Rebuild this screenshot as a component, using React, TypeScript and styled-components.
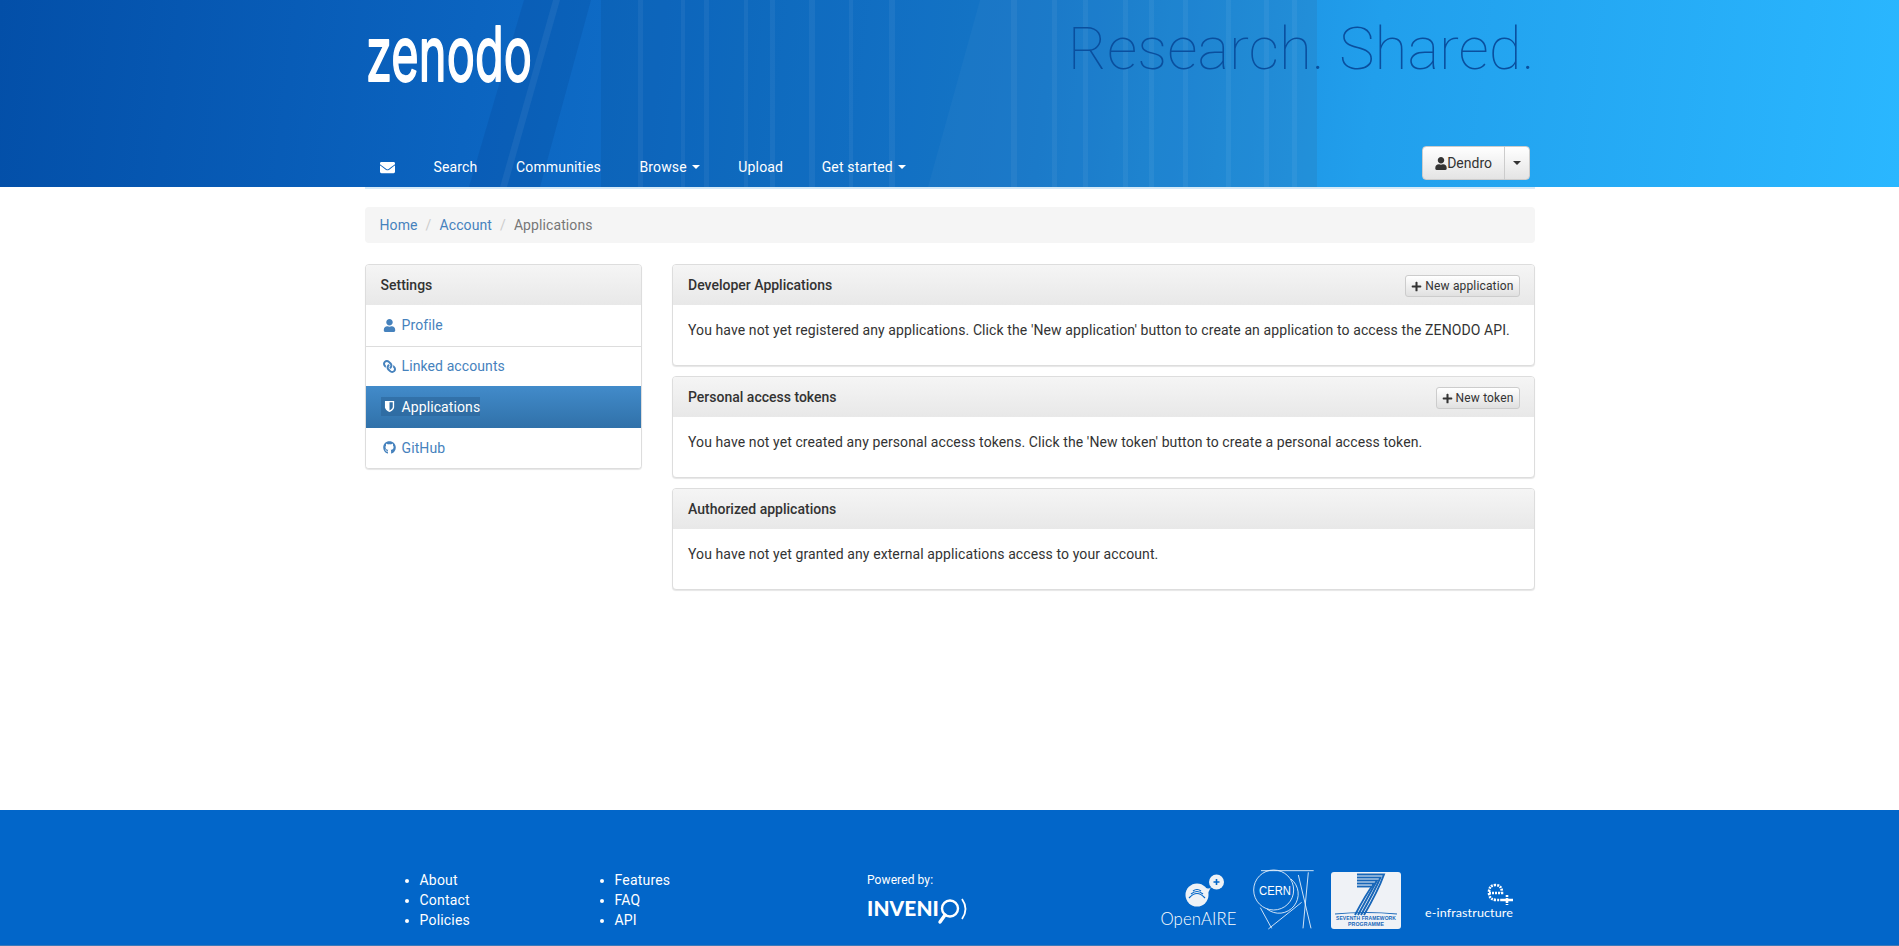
import React from 'react';
import styled, { createGlobalStyle } from 'styled-components';
import { FaEnvelope, FaUser, FaLink, FaGithub, FaPlus } from 'react-icons/fa';

const GlobalStyle = createGlobalStyle`
    html, body {
        margin: 0;
        padding: 0;
        background: #fff;
    }
    body {
        font-family: Roboto, "Liberation Sans", sans-serif;
        font-size: 14px;
        line-height: 20px;
        letter-spacing: 0.1px;
        color: #333;
    }
    * {
        box-sizing: border-box;
    }
`;

const Page = styled.div`
    min-height: 946px;
    display: flex;
    flex-direction: column;
`;

const Header = styled.header`
    position: relative;
    height: 187px;
    overflow: hidden;
    background: linear-gradient(97deg, #034fa8 0%, #0b64c0 25%, #1880d6 55%, #219fec 72%, #2ab7ff 100%);
`;

const HeaderArt = styled.svg`
    position: absolute;
    left: 0;
    top: 0;
`;

const HeaderInner = styled.div`
    position: relative;
    width: 1170px;
    height: 187px;
    margin: 0 auto;
    display: flex;
    flex-direction: column;
    justify-content: space-between;
`;

const TopRow = styled.div`
    display: flex;
    justify-content: space-between;
    align-items: flex-start;
`;

const Logo = styled.svg`
    display: block;
    margin-top: 20px;
    overflow: visible;
`;

const Tagline = styled.div`
    margin: 13px 0 0 0;
    font-size: 60px;
    line-height: 72px;
    font-weight: 100;
    letter-spacing: 0;
    color: #0a4f9e;
`;

const NavRow = styled.div`
    display: flex;
    justify-content: space-between;
    align-items: flex-end;
    padding: 0 4.5px 7px 15.5px;
`;

const Nav = styled.nav`
    display: flex;
    gap: 38.5px;
    margin-bottom: 3px;
`;

const NavLink = styled.a`
    display: flex;
    align-items: center;
    gap: 5px;
    color: #fff;
    font-weight: 400;
    letter-spacing: 0.16px;
    line-height: 20px;
`;

const Caret = styled.span<{ $color?: string }>`
    display: inline-block;
    width: 0;
    height: 0;
    border-top: 4px solid ${p => p.$color || '#fff'};
    border-left: 4px solid transparent;
    border-right: 4px solid transparent;
`;

const UserGroup = styled.div`
    display: flex;
    height: 34px;
`;

const UserButton = styled.button`
    display: flex;
    align-items: center;
    height: 34px;
    padding: 0 12px;
    border: 1px solid #ccc;
    border-radius: 4px 0 0 4px;
    background: linear-gradient(#fff, #e4e4e4);
    font: 14px/20px Roboto, sans-serif;
    color: #333;
    svg {
        width: 12px;
        height: 13px;
    }
`;

const CaretButton = styled.button`
    display: flex;
    align-items: center;
    justify-content: center;
    width: 26px;
    height: 34px;
    padding: 0;
    margin-left: -1px;
    border: 1px solid #ccc;
    border-radius: 0 4px 4px 0;
    background: linear-gradient(#fff, #e4e4e4);
`;

const HeaderEdge = styled.div`
    width: 1170px;
    height: 2px;
    margin: 0 auto;
    background: #d6eaf8;
`;

const Container = styled.main`
    width: 1170px;
    margin: 18px auto 0;
    flex: 1;
`;

const Breadcrumb = styled.ol`
    display: flex;
    height: 36px;
    margin: 0 0 21px;
    padding: 8px 15px;
    list-style: none;
    background: #f5f5f5;
    border-radius: 4px;
`;

const Crumb = styled.li`
    color: #777;
    & + &::before {
        content: '/';
        padding: 0 8px;
        color: #ccc;
    }
`;

const Link = styled.a`
    color: #4682bd;
`;

const Columns = styled.div`
    display: grid;
    grid-template-columns: 277.5px 862.5px;
    gap: 30px;
    align-items: start;
`;

const Panel = styled.section`
    background: #fff;
    border: 1px solid #ddd;
    border-radius: 4px;
    box-shadow: 0 1px 1px rgba(0, 0, 0, 0.1);
    overflow: hidden;
`;

const MainStack = styled.div`
    display: flex;
    flex-direction: column;
    gap: 10px;
`;

const PanelHeading = styled.div`
    display: flex;
    justify-content: space-between;
    align-items: center;
    height: 40px;
    padding: 0 14px 0 15px;
    background: linear-gradient(#f5f5f5, #e8e8e8);
    font-weight: 500;
    letter-spacing: 0;
    color: #333;
`;

const PanelBody = styled.div`
    padding: 15px 15px 25px;
`;

const Paragraph = styled.p`
    margin: 0;
`;

const SmallButton = styled.button`
    display: flex;
    align-items: center;
    gap: 3px;
    height: 22px;
    margin-top: 2px;
    padding: 0 5px;
    border: 1px solid #ccc;
    border-radius: 3px;
    background: linear-gradient(#fff, #e0e0e0);
    font: 12px/18px Roboto, sans-serif;
    letter-spacing: 0.15px;
    color: #333;
    svg {
        width: 11px;
        height: 11px;
    }
`;

const MenuItem = styled.a<{ $active?: boolean; $divider?: boolean; $height: number }>`
    display: flex;
    align-items: center;
    height: ${p => p.$height}px;
    padding-left: 15px;
    color: ${p => (p.$active ? '#fff' : '#4682bd')};
    background: ${p => (p.$active ? 'linear-gradient(#428bca, #3071a9)' : '#fff')};
    border-top: ${p => (p.$divider ? '1px solid #ddd' : 'none')};
`;

const MenuLabel = styled.span<{ $active?: boolean }>`
    display: flex;
    align-items: center;
    height: 19px;
    background: ${p => (p.$active ? 'rgba(42, 98, 150, 0.55)' : 'transparent')};
`;

const MenuIcon = styled.span<{ $flip?: boolean }>`
    display: flex;
    justify-content: center;
    width: 18px;
    margin-right: 3px;
    transform: ${p => (p.$flip ? 'scaleX(-1)' : 'none')};
    svg {
        width: 13px;
        height: 13px;
    }
`;

const Footer = styled.footer`
    height: 136px;
    background: #0266c9;
    border-bottom: 1px solid #3b79b8;
`;

const FooterInner = styled.div`
    display: grid;
    grid-template-columns: 195px 195px 390px 390px;
    width: 1170px;
    margin: 0 auto;
    padding-top: 60px;
    color: #fff;
`;

const FooterList = styled.ul`
    margin: 0;
    padding: 0 0 0 55px;
    letter-spacing: 0.2px;
`;

const FooterItem = styled.li`
    line-height: 20px;
`;

const PoweredBlock = styled.div`
    padding-left: 112.5px;
`;

const PoweredLabel = styled.div`
    font-size: 12px;
    letter-spacing: 0.1px;
    line-height: 20px;
`;

const InvenioArt = styled.svg`
    display: block;
    margin-top: 6px;
`;

const Logos = styled.div`
    display: flex;
    margin-top: -5px;
    padding-left: 15px;
`;

const LogoArt = styled.svg<{ $gap?: number }>`
    display: block;
    flex: none;
    overflow: visible;
    margin-right: ${p => p.$gap || 0}px;
`;

const VERTICAL_STRIPES = [
    [638, 5], [681, 4], [704, 5], [744, 4], [770, 5], [809, 6], [849, 4], [889, 6],
    [1011, 6], [1052, 5], [1083, 5], [1123, 5], [1149, 5], [1183, 5], [1226, 5], [1264, 5], [1292, 5],
];

function HeaderBackground() {
    return (
        <HeaderArt width="1899" height="187" aria-hidden="true">
            <polygon points="524,0 591,0 540,187 469,187" fill="#003a80" opacity="0.16" />
            <polygon points="553,0 560,0 507,187 500,187" fill="#fff" opacity="0.06" />
            <rect x="601" y="0" width="716" height="187" fill="#00386f" opacity="0.13" />
            <polygon points="980,0 1317,0 1317,187 928,187" fill="#fff" opacity="0.03" />
            {VERTICAL_STRIPES.map(([x, w]) => (
                <rect key={x} x={x} y="0" width={w} height="187" fill="#fff" opacity="0.05" />
            ))}
        </HeaderArt>
    );
}

function ShieldIcon() {
    return (
        <svg viewBox="0 0 1792 1792" fill="currentColor">
            <path d="M1344 960v-640h-448v1137q119-63 213-137 235-184 235-360zm192-768v768q0 86-33.5 170.5t-83 150-118 127.5-126.5 103-121 77.5-89.5 42.5-40 16-44.5 0-40-16-89.5-42.5-121-77.5-126.5-103-118-127.5-83-150-33.5-170.5v-768q0-26 19-45t45-19h1152q26 0 45 19t19 45z" />
        </svg>
    );
}

function OpenAireLogo() {
    return (
        <LogoArt $gap={15} width="78" height="70" viewBox="0 0 78 70">
            <circle cx="37" cy="30" r="11.5" fill="#eef2f6" />
            <circle cx="56.5" cy="17" r="7.5" fill="#eef2f6" />
            <path d="M44 22 Q49 25 51 22 L47 30 Z" fill="#eef2f6" />
            <path d="M53.5 17 H59.5 M56.5 14 V20" stroke="#0266c9" strokeWidth="1.6" />
            <path d="M29 33 Q37 24 45 33 M31 29 Q37 24 43 29 M33 26 Q37 23 41 26" stroke="#0266c9" strokeWidth="1.2" fill="none" />
            <text x="0.5" y="60" fontFamily="Lato, sans-serif" fontWeight="300" fontSize="18" fill="#fff" textLength="76" lengthAdjust="spacingAndGlyphs">OpenAIRE</text>
        </LogoArt>
    );
}

function CernLogo() {
    return (
        <LogoArt $gap={16} width="62" height="70" viewBox="36 0 186 210">
            <g fill="none" stroke="#eef4fb" strokeWidth="2.6">
                <circle cx="98" cy="75" r="60" />
                <path d="M150 42 A52 52 0 0 1 78 132" />
                <path d="M60 17 H218" />
                <path d="M202 22 L186 190" />
                <path d="M172 30 L210 190" />
                <path d="M82 192 L182 112" />
                <path d="M58 128 L92 190" />
            </g>
            <text x="54" y="91" fontFamily="Liberation Sans, sans-serif" fontSize="40" fill="#fff" textLength="96" lengthAdjust="spacingAndGlyphs">CERN</text>
        </LogoArt>
    );
}

function SevenLogo() {
    return (
        <LogoArt $gap={24} width="70" height="70" viewBox="0 0 70 70">
            <rect x="0" y="7" width="70" height="57" rx="3" fill="#eff2f6" />
            <g fill="none" stroke="#1766b8" strokeWidth="1.9">
                <path d="M26 9.5 H53 Q47 26 33 50" />
                <path d="M26 12.5 H49.5 Q43 27 30 50" />
                <path d="M26 15.5 H46 Q39 28 27 50" />
                <path d="M26 18.5 H43 Q35 29 24 50" />
                <path d="M26 21.5 H40" />
            </g>
            <path d="M4 49 Q35 46 66 49" stroke="#1766b8" strokeWidth="1.2" fill="none" />
            <text x="5" y="54.5" fontFamily="Liberation Sans, sans-serif" fontSize="5.2" fontWeight="700" fill="#1766b8" textLength="60" lengthAdjust="spacingAndGlyphs">SEVENTH FRAMEWORK</text>
            <text x="17" y="60.5" fontFamily="Liberation Sans, sans-serif" fontSize="5.2" fontWeight="700" fill="#1766b8" textLength="36" lengthAdjust="spacingAndGlyphs">PROGRAMME</text>
        </LogoArt>
    );
}

function InfrastructureLogo() {
    return (
        <LogoArt width="90" height="70" viewBox="0 0 90 70">
            <path
                d="M64 28 H77 Q77 20 70.5 20 Q64 20 64 27.5 Q64 35 72 35 H86 M82 30 V40 M77 35 H88"
                fill="none"
                stroke="#fff"
                strokeWidth="2.6"
                strokeDasharray="2 1"
            />
            <text x="0" y="52" fontFamily="Lato, sans-serif" fontSize="11.5" fill="#fff" textLength="88" lengthAdjust="spacingAndGlyphs">e-infrastructure</text>
        </LogoArt>
    );
}

function InvenioLogo() {
    return (
        <InvenioArt width="102" height="30" viewBox="0 0 102 30">
            <text x="0" y="20" fontFamily="Lato, sans-serif" fontWeight="900" fontSize="21" fill="#fff" textLength="72" lengthAdjust="spacingAndGlyphs">INVENI</text>
            <circle cx="83" cy="12.5" r="8" fill="none" stroke="#fff" strokeWidth="2.4" />
            <path d="M78 19 L73 26" stroke="#fff" strokeWidth="3.4" strokeLinecap="round" />
            <path d="M95 3 Q102 13 95 23" fill="none" stroke="#fff" strokeWidth="1.8" />
        </InvenioArt>
    );
}

export default function App() {
    return (
        <Page>
            <GlobalStyle />
            <Header>
                <HeaderBackground />
                <HeaderInner>
                    <TopRow>
                        <Logo width="170" height="66" viewBox="0 0 170 66">
                            <text x="1" y="61" fontFamily="Inter, sans-serif" fontSize="76" fill="#fff" stroke="#fff" strokeWidth="1.8" strokeLinejoin="round" textLength="166" lengthAdjust="spacingAndGlyphs">zenodo</text>
                        </Logo>
                        <Tagline>Research. Shared.</Tagline>
                    </TopRow>
                    <NavRow>
                        <Nav>
                            <NavLink><FaEnvelope size={15} /></NavLink>
                            <NavLink>Search</NavLink>
                            <NavLink>Communities</NavLink>
                            <NavLink>Browse <Caret /></NavLink>
                            <NavLink>Upload</NavLink>
                            <NavLink>Get started <Caret /></NavLink>
                        </Nav>
                        <UserGroup>
                            <UserButton><FaUser />Dendro</UserButton>
                            <CaretButton><Caret $color="#333" /></CaretButton>
                        </UserGroup>
                    </NavRow>
                </HeaderInner>
            </Header>
            <HeaderEdge />
            <Container>
                <Breadcrumb>
                    <Crumb><Link>Home</Link></Crumb>
                    <Crumb><Link>Account</Link></Crumb>
                    <Crumb>Applications</Crumb>
                </Breadcrumb>
                <Columns>
                    <Panel>
                        <PanelHeading>Settings</PanelHeading>
                        <MenuItem $height={40.5}>
                            <MenuLabel><MenuIcon><FaUser /></MenuIcon>Profile</MenuLabel>
                        </MenuItem>
                        <MenuItem $height={40.5} $divider>
                            <MenuLabel><MenuIcon $flip><FaLink /></MenuIcon>Linked accounts</MenuLabel>
                        </MenuItem>
                        <MenuItem $height={41.5} $active>
                            <MenuLabel $active><MenuIcon><ShieldIcon /></MenuIcon>Applications</MenuLabel>
                        </MenuItem>
                        <MenuItem $height={40}>
                            <MenuLabel><MenuIcon><FaGithub /></MenuIcon>GitHub</MenuLabel>
                        </MenuItem>
                    </Panel>
                    <MainStack>
                        <Panel>
                            <PanelHeading>
                                Developer Applications
                                <SmallButton><FaPlus />New application</SmallButton>
                            </PanelHeading>
                            <PanelBody>
                                <Paragraph>You have not yet registered any applications. Click the 'New application' button to create an application to access the ZENODO API.</Paragraph>
                            </PanelBody>
                        </Panel>
                        <Panel>
                            <PanelHeading>
                                Personal access tokens
                                <SmallButton><FaPlus />New token</SmallButton>
                            </PanelHeading>
                            <PanelBody>
                                <Paragraph>You have not yet created any personal access tokens. Click the 'New token' button to create a personal access token.</Paragraph>
                            </PanelBody>
                        </Panel>
                        <Panel>
                            <PanelHeading>Authorized applications</PanelHeading>
                            <PanelBody>
                                <Paragraph>You have not yet granted any external applications access to your account.</Paragraph>
                            </PanelBody>
                        </Panel>
                    </MainStack>
                </Columns>
            </Container>
            <Footer>
                <FooterInner>
                    <FooterList>
                        <FooterItem>About</FooterItem>
                        <FooterItem>Contact</FooterItem>
                        <FooterItem>Policies</FooterItem>
                    </FooterList>
                    <FooterList>
                        <FooterItem>Features</FooterItem>
                        <FooterItem>FAQ</FooterItem>
                        <FooterItem>API</FooterItem>
                    </FooterList>
                    <PoweredBlock>
                        <PoweredLabel>Powered by:</PoweredLabel>
                        <InvenioLogo />
                    </PoweredBlock>
                    <Logos>
                        <OpenAireLogo />
                        <CernLogo />
                        <SevenLogo />
                        <InfrastructureLogo />
                    </Logos>
                </FooterInner>
            </Footer>
        </Page>
    );
}
